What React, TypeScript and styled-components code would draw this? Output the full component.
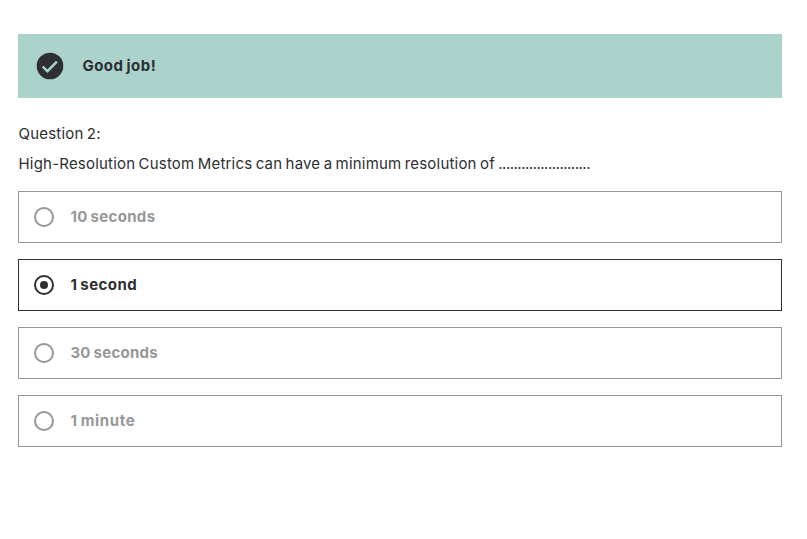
import React, { useState } from "react";
import styled, { createGlobalStyle } from "styled-components";

const Global = createGlobalStyle`
  * { box-sizing: border-box; }
  body { margin: 0; background: #fff; color: #2d2f31; font: 400 15px/30px Inter, sans-serif; }
`;
const Quiz = styled.main`
  width: 764px;
  margin: 34px 0 0 18px;
`;
const Banner = styled.div`
  display: flex;
  align-items: center;
  gap: 18px;
  height: 64px;
  padding-left: 18px;
  background: #acd2cc;
`;
const Label = styled.span<{ $spacing: number }>`
  padding-left: 0.4px;
  white-space: nowrap;
  font-weight: 700;
  letter-spacing: ${p => p.$spacing}px;
  word-spacing: -1px;
`;
const Question = styled.div`
  padding: 21px 0 12px 0.5px;
`;
const Line = styled.p`
  margin: 0;
  white-space: nowrap;
  letter-spacing: 0.2px;
  word-spacing: -1.1px;
`;
const Blank = styled.span`
  letter-spacing: -0.5px;
`;
const Answers = styled.div`
  display: flex;
  flex-direction: column;
  gap: 16px;
`;
const Answer = styled.button<{ $selected: boolean }>`
  display: flex;
  align-items: center;
  gap: 16px;
  height: 52px;
  padding: 0 0 0 15px;
  border: 1px solid ${p => (p.$selected ? "#2d2f31" : "#969797")};
  border-radius: 0;
  background: #fff;
  color: ${p => (p.$selected ? "#2d2f31" : "#969797")};
  font: inherit;
  text-align: left;
`;
const Radio = styled.span`
  display: grid;
  place-items: center;
  width: 20px;
  height: 20px;
  border: 2px solid currentColor;
  border-radius: 50%;
`;
const Dot = styled.span`
  width: 8px;
  height: 8px;
  border-radius: 50%;
  background: currentColor;
`;
const options = [
  { text: "10 seconds", spacing: 0.33 },
  { text: "1 second", spacing: 0.44 },
  { text: "30 seconds", spacing: 0.27 },
  { text: "1 minute", spacing: 0.64 },
];

export default function App() {
  const [selected, setSelected] = useState(1);
  return (
    <>
      <Global />
      <Quiz>
        <Banner>
          <svg width="28" height="28" viewBox="0 0 28 28" aria-hidden="true">
            <circle cx="14" cy="14" r="13.3" fill="#2d2f31" />
            <path d="m6.6 14.5 4.8 4.7 9.5-9.6" fill="none" stroke="#acd2cc" strokeWidth="2.4" />
          </svg>
          <Label $spacing={0.5}>Good job!</Label>
        </Banner>
        <Question>
          <Line>Question 2:</Line>
          <Line>
            High-Resolution Custom Metrics can have a minimum resolution of{" "}
            <Blank>........................</Blank>
          </Line>
        </Question>
        <Answers>
          {options.map((o, i) => (
            <Answer key={o.text} $selected={i === selected} onClick={() => setSelected(i)}>
              <Radio>{i === selected && <Dot />}</Radio>
              <Label $spacing={o.spacing}>{o.text}</Label>
            </Answer>
          ))}
        </Answers>
      </Quiz>
    </>
  );
}
